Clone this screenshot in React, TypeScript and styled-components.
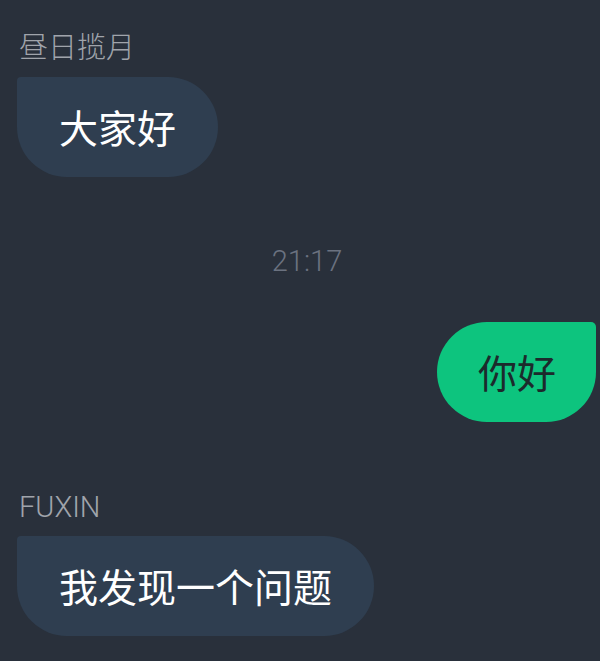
import React from "react";
import styled, { createGlobalStyle } from "styled-components";

const Global = createGlobalStyle`
  html, body { margin: 0; padding: 0; background: #29303b; }
  body { font-family: Roboto, "Noto Sans CJK SC", sans-serif; }
`;

const Page = styled.div`
  min-height: 661px;
  background: #29303b;
  padding: 30px 4px 0 17px;
  box-sizing: border-box;
  display: flex;
  flex-direction: column;
`;

const Group = styled.div<{ $side: "left" | "right"; $mt: number }>`
  display: flex;
  flex-direction: column;
  align-items: ${(p) => (p.$side === "left" ? "flex-start" : "flex-end")};
  margin-top: ${(p) => p.$mt}px;
  gap: 11px;
`;

const Name = styled.div`
  font-family: Roboto, "Noto Sans CJK SC", sans-serif;
  font-size: 29px;
  font-weight: 300;
  line-height: 36px;
  color: #a0a4ab;
  padding-left: 2px;
`;

const Bubble = styled.div<{ $side: "left" | "right" }>`
  height: 100px;
  box-sizing: border-box;
  display: flex;
  align-items: center;
  padding: ${(p) => (p.$side === "left" ? "0 42px 2px 42px" : "0 40px 2px 41px")};
  font-family: "Noto Sans CJK SC", sans-serif;
  font-size: 39px;
  background: ${(p) => (p.$side === "left" ? "#2f3e50" : "#0dc47e")};
  color: ${(p) => (p.$side === "left" ? "#ffffff" : "#1c2a2c")};
  border-radius: ${(p) =>
    p.$side === "left" ? "4px 50px 50px 50px" : "50px 5px 50px 50px"};
`;

const Time = styled.div`
  margin-top: 64px;
  text-align: center;
  font-family: Roboto, sans-serif;
  font-size: 29px;
  font-weight: 300;
  line-height: 40px;
  color: #6b7280;
  padding-left: 1px;
`;

export default function App() {
  return (
    <>
      <Global />
      <Page>
        <Group $side="left" $mt={0}>
          <Name>昼日揽月</Name>
          <Bubble $side="left">大家好</Bubble>
        </Group>
        <Time>21:17</Time>
        <Group $side="right" $mt={41}>
          <Bubble $side="right">你好</Bubble>
        </Group>
        <Group $side="left" $mt={67}>
          <Name>FUXIN</Name>
          <Bubble $side="left">我发现一个问题</Bubble>
        </Group>
      </Page>
    </>
  );
}
